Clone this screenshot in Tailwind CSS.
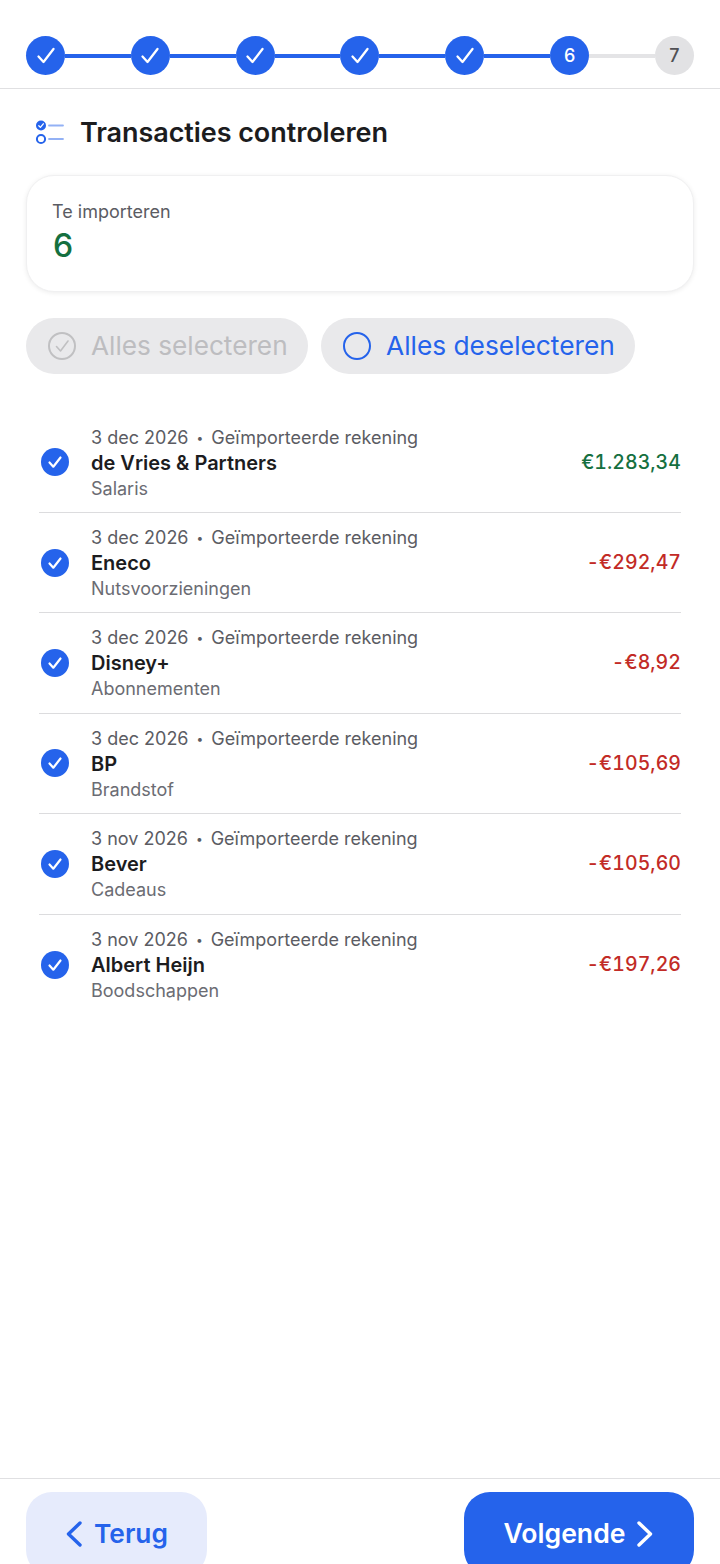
<!DOCTYPE html>
<html lang="nl"><head><meta charset="utf-8"><script src="https://cdn.jsdelivr.net/npm/@tailwindcss/browser@4"></script></head>
<body class="bg-white">
<div class="w-[720px] h-[1564px] overflow-hidden flex flex-col font-['Inter',sans-serif] text-[#1c1c1e]">
  <div class="h-[89px] shrink-0 border-b border-[#e0e0e2] px-[26px] pt-[36px]">
    <div class="flex items-center">
      <div class="size-[39px] shrink-0 rounded-full bg-[#2563eb] flex items-center justify-center"><svg width="20" height="20" viewBox="0 0 20 20" fill="none" stroke="#fff" stroke-width="2.3" stroke-linecap="round" stroke-linejoin="round"><path d="M2.5 10.5l5 5.5L17.5 3"/></svg></div>
      <div class="flex-1 h-[4px] bg-[#2563eb]"></div>
      <div class="size-[39px] shrink-0 rounded-full bg-[#2563eb] flex items-center justify-center"><svg width="20" height="20" viewBox="0 0 20 20" fill="none" stroke="#fff" stroke-width="2.3" stroke-linecap="round" stroke-linejoin="round"><path d="M2.5 10.5l5 5.5L17.5 3"/></svg></div>
      <div class="flex-1 h-[4px] bg-[#2563eb]"></div>
      <div class="size-[39px] shrink-0 rounded-full bg-[#2563eb] flex items-center justify-center"><svg width="20" height="20" viewBox="0 0 20 20" fill="none" stroke="#fff" stroke-width="2.3" stroke-linecap="round" stroke-linejoin="round"><path d="M2.5 10.5l5 5.5L17.5 3"/></svg></div>
      <div class="flex-1 h-[4px] bg-[#2563eb]"></div>
      <div class="size-[39px] shrink-0 rounded-full bg-[#2563eb] flex items-center justify-center"><svg width="20" height="20" viewBox="0 0 20 20" fill="none" stroke="#fff" stroke-width="2.3" stroke-linecap="round" stroke-linejoin="round"><path d="M2.5 10.5l5 5.5L17.5 3"/></svg></div>
      <div class="flex-1 h-[4px] bg-[#2563eb]"></div>
      <div class="size-[39px] shrink-0 rounded-full bg-[#2563eb] flex items-center justify-center"><svg width="20" height="20" viewBox="0 0 20 20" fill="none" stroke="#fff" stroke-width="2.3" stroke-linecap="round" stroke-linejoin="round"><path d="M2.5 10.5l5 5.5L17.5 3"/></svg></div>
      <div class="flex-1 h-[4px] bg-[#2563eb]"></div>
      <div class="size-[39px] shrink-0 rounded-full bg-[#2563eb] flex items-center justify-center text-white text-[18px] font-medium">6</div>
      <div class="flex-1 h-[4px] bg-[#e4e4e6]"></div>
      <div class="size-[39px] shrink-0 rounded-full bg-[#e2e2e4] flex items-center justify-center text-[#505054] text-[18px] font-medium">7</div>
    </div>
  </div>
  <div class="flex-1 px-[26px]">
    <div class="flex items-center h-[86px] pl-[9px] gap-[16px]">
      <svg width="29" height="26" viewBox="0 0 29 26" fill="none"><circle cx="6" cy="6.5" r="5" fill="#2563eb"/><path d="M3.8 6.7l1.6 1.7 2.9-3.6" stroke="#fff" stroke-width="1.3" stroke-linecap="round" stroke-linejoin="round"/><circle cx="6" cy="20" r="4.1" stroke="#2563eb" stroke-width="2"/><path d="M14 6.5h14M14 20h14" stroke="#93b1f5" stroke-width="1.8" stroke-linecap="round"/></svg>
      <h1 class="text-[27px] leading-[34px] pt-[1px] font-semibold tracking-[-0.07px]">Transacties controleren</h1>
    </div>
    <div class="h-[117px] rounded-[28px] bg-white border border-[#f0f0f1] shadow-[0_1px_5px_rgba(0,0,0,0.08)] pl-[25px] pt-[24px]">
      <div class="text-[18px] leading-[24px] text-[#5b5c63]">Te importeren</div>
      <div class="text-[32px] leading-[42px] pt-[1px] pl-[1px] font-medium text-[#15703f]">6</div>
    </div>
    <div class="flex gap-[13px] mt-[26px]">
      <div class="h-[56px] w-[282px] rounded-full bg-[#e9e9eb] flex items-center pl-[21px] gap-[14px]">
        <svg width="30" height="30" viewBox="0 0 30 30" fill="none" stroke="#c0c0c2"><circle cx="15" cy="15" r="13" stroke-width="2"/><path d="M9.5 15.5l4 4.5 7.5-10" stroke-width="1.6" stroke-linecap="round" stroke-linejoin="round"/></svg>
        <span class="text-[26.2px] leading-[34px] text-[#bdbdc0]">Alles selecteren</span>
      </div>
      <div class="h-[56px] w-[314px] rounded-full bg-[#e9e9eb] flex items-center pl-[21px] gap-[14px]">
        <svg width="30" height="30" viewBox="0 0 30 30" fill="none" stroke="#2563eb"><circle cx="15" cy="15" r="13" stroke-width="2"/></svg>
        <span class="text-[26.3px] leading-[34px] text-[#2563eb]">Alles deselecteren</span>
      </div>
    </div>
    <div class="mt-[38.6px] mx-[13px]">
      <div class="h-[100.4px] border-b border-[#dcdcde] flex items-center">
        <div class="w-[52px] shrink-0 pl-[2.3px]"><svg width="28" height="28" viewBox="0 0 28 28"><circle cx="14" cy="14" r="14" fill="#2563eb"/><path d="M8.5 14.5l3.8 4.2 7.2-9.2" fill="none" stroke="#fff" stroke-width="2.2" stroke-linecap="round" stroke-linejoin="round"/></svg></div>
        <div class="flex-1 pt-[1.5px]"><div class="text-[18px] leading-[25px] text-[#5b5c63] flex items-center">3 dec 2026<span class="mx-[8px] text-[12px]">•</span>Geïmporteerde rekening</div><div class="text-[20px] leading-[26px] font-semibold">de Vries &amp; Partners</div><div class="text-[18px] leading-[26px] text-[#6b6c73]">Salaris</div></div>
        <div class="text-[19.5px] font-medium tabular-nums tracking-[0.05px] text-[#15703f]">€1.283,34</div>
      </div>
      <div class="h-[100.4px] border-b border-[#dcdcde] flex items-center">
        <div class="w-[52px] shrink-0 pl-[2.3px]"><svg width="28" height="28" viewBox="0 0 28 28"><circle cx="14" cy="14" r="14" fill="#2563eb"/><path d="M8.5 14.5l3.8 4.2 7.2-9.2" fill="none" stroke="#fff" stroke-width="2.2" stroke-linecap="round" stroke-linejoin="round"/></svg></div>
        <div class="flex-1 pt-[1.5px]"><div class="text-[18px] leading-[25px] text-[#5b5c63] flex items-center">3 dec 2026<span class="mx-[8px] text-[12px]">•</span>Geïmporteerde rekening</div><div class="text-[20px] leading-[26px] font-semibold">Eneco</div><div class="text-[18px] leading-[26px] text-[#6b6c73]">Nutsvoorzieningen</div></div>
        <div class="text-[19.5px] font-medium tabular-nums tracking-[0.05px] text-[#c22b26]">-€292,47</div>
      </div>
      <div class="h-[100.4px] border-b border-[#dcdcde] flex items-center">
        <div class="w-[52px] shrink-0 pl-[2.3px]"><svg width="28" height="28" viewBox="0 0 28 28"><circle cx="14" cy="14" r="14" fill="#2563eb"/><path d="M8.5 14.5l3.8 4.2 7.2-9.2" fill="none" stroke="#fff" stroke-width="2.2" stroke-linecap="round" stroke-linejoin="round"/></svg></div>
        <div class="flex-1 pt-[1.5px]"><div class="text-[18px] leading-[25px] text-[#5b5c63] flex items-center">3 dec 2026<span class="mx-[8px] text-[12px]">•</span>Geïmporteerde rekening</div><div class="text-[20px] leading-[26px] font-semibold">Disney+</div><div class="text-[18px] leading-[26px] text-[#6b6c73]">Abonnementen</div></div>
        <div class="text-[19.5px] font-medium tabular-nums tracking-[0.05px] text-[#c22b26]">-€8,92</div>
      </div>
      <div class="h-[100.4px] border-b border-[#dcdcde] flex items-center">
        <div class="w-[52px] shrink-0 pl-[2.3px]"><svg width="28" height="28" viewBox="0 0 28 28"><circle cx="14" cy="14" r="14" fill="#2563eb"/><path d="M8.5 14.5l3.8 4.2 7.2-9.2" fill="none" stroke="#fff" stroke-width="2.2" stroke-linecap="round" stroke-linejoin="round"/></svg></div>
        <div class="flex-1 pt-[1.5px]"><div class="text-[18px] leading-[25px] text-[#5b5c63] flex items-center">3 dec 2026<span class="mx-[8px] text-[12px]">•</span>Geïmporteerde rekening</div><div class="text-[20px] leading-[26px] font-semibold">BP</div><div class="text-[18px] leading-[26px] text-[#6b6c73]">Brandstof</div></div>
        <div class="text-[19.5px] font-medium tabular-nums tracking-[0.05px] text-[#c22b26]">-€105,69</div>
      </div>
      <div class="h-[100.4px] border-b border-[#dcdcde] flex items-center">
        <div class="w-[52px] shrink-0 pl-[2.3px]"><svg width="28" height="28" viewBox="0 0 28 28"><circle cx="14" cy="14" r="14" fill="#2563eb"/><path d="M8.5 14.5l3.8 4.2 7.2-9.2" fill="none" stroke="#fff" stroke-width="2.2" stroke-linecap="round" stroke-linejoin="round"/></svg></div>
        <div class="flex-1 pt-[1.5px]"><div class="text-[18px] leading-[25px] text-[#5b5c63] flex items-center">3 nov 2026<span class="mx-[8px] text-[12px]">•</span>Geïmporteerde rekening</div><div class="text-[20px] leading-[26px] font-semibold">Bever</div><div class="text-[18px] leading-[26px] text-[#6b6c73]">Cadeaus</div></div>
        <div class="text-[19.5px] font-medium tabular-nums tracking-[0.05px] text-[#c22b26]">-€105,60</div>
      </div>
      <div class="h-[100.4px] flex items-center">
        <div class="w-[52px] shrink-0 pl-[2.3px]"><svg width="28" height="28" viewBox="0 0 28 28"><circle cx="14" cy="14" r="14" fill="#2563eb"/><path d="M8.5 14.5l3.8 4.2 7.2-9.2" fill="none" stroke="#fff" stroke-width="2.2" stroke-linecap="round" stroke-linejoin="round"/></svg></div>
        <div class="flex-1 pt-[1.5px]"><div class="text-[18px] leading-[25px] text-[#5b5c63] flex items-center">3 nov 2026<span class="mx-[8px] text-[12px]">•</span>Geïmporteerde rekening</div><div class="text-[20px] leading-[26px] font-semibold">Albert Heijn</div><div class="text-[18px] leading-[26px] text-[#6b6c73]">Boodschappen</div></div>
        <div class="text-[19.5px] font-medium tabular-nums tracking-[0.05px] text-[#c22b26]">-€197,26</div>
      </div>
    </div>
  </div>
  <div class="h-[86px] shrink-0 border-t border-[#e0e0e2] px-[26px] pt-[13px] flex justify-between">
    <div class="h-[84px] w-[181px] rounded-[26px] bg-[#e6ebfc] flex items-center justify-center gap-[11px] pb-[1px] text-[#2563eb] text-[26.3px] font-semibold self-start">
      <svg width="18" height="26" viewBox="0 0 18 26" fill="none" stroke="currentColor" stroke-width="3.4" stroke-linecap="round" stroke-linejoin="round"><path d="M15 2L3.5 13 15 24"/></svg><span>Terug</span>
    </div>
    <div class="h-[84px] w-[230px] rounded-[26px] bg-[#2563eb] flex items-center justify-center gap-[11px] pb-[1px] text-white text-[26.6px] font-semibold self-start">
      <span>Volgende</span><svg width="18" height="26" viewBox="0 0 18 26" fill="none" stroke="currentColor" stroke-width="3.4" stroke-linecap="round" stroke-linejoin="round"><path d="M3 2l11.500 11L3 24"/></svg>
    </div>
  </div>
</div>
</body></html>
